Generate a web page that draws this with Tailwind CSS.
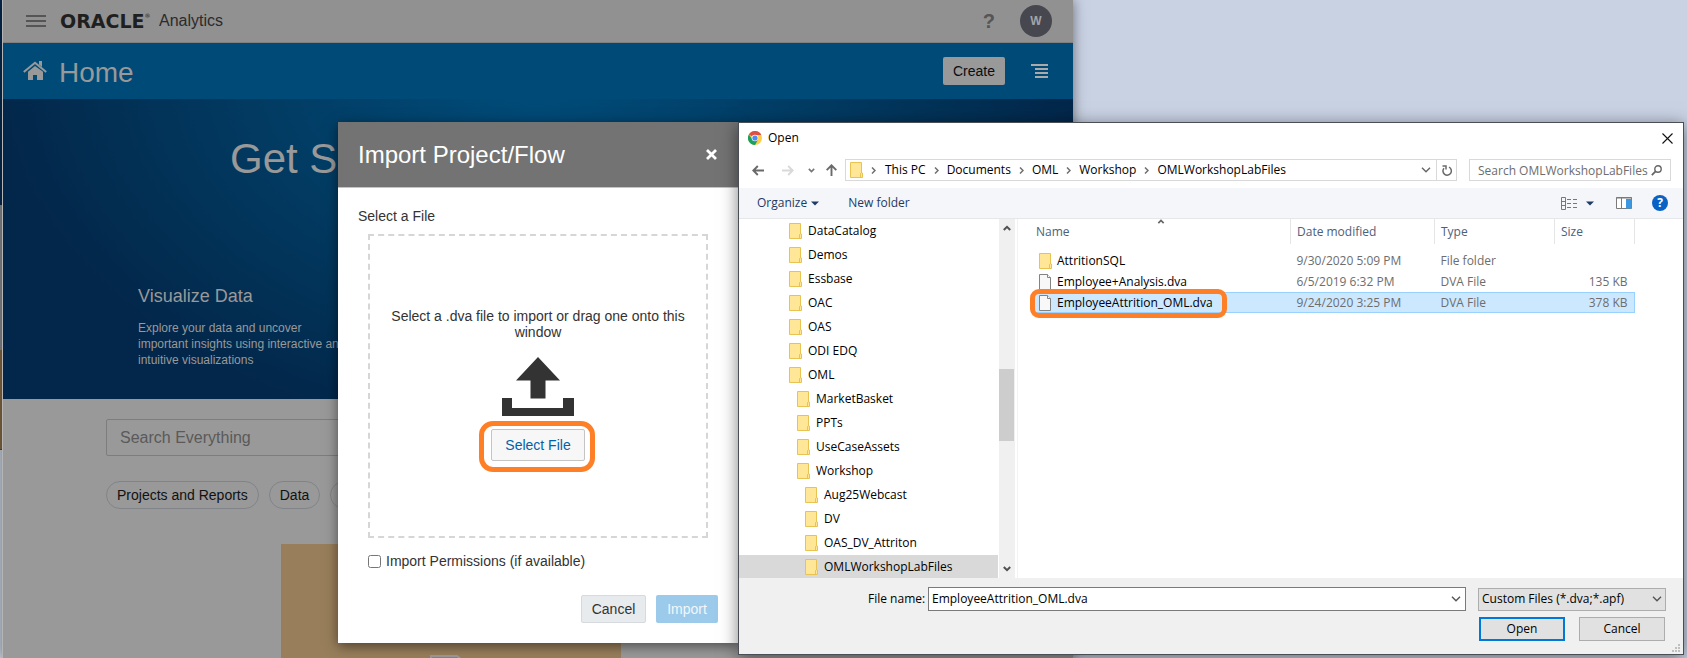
<!DOCTYPE html>
<html lang="en">
<head>
<meta charset="utf-8">
<title>Oracle Analytics - Import Project/Flow</title>
<script src="https://cdn.jsdelivr.net/npm/@tailwindcss/browser@4"></script>
</head>
<body class="font-['Liberation_Sans',Arial,sans-serif]">
<svg class="hidden" aria-hidden="true">
  <defs>
    <symbol id="folder" viewBox="0 0 13 16"><path d="M.5.5h11v10.500h1v4.500H.5z" fill="#ffe797" stroke="#e9c351"/><path d="M10.500 15.500v-4l1-1" fill="none" stroke="#e9c351"/></symbol>
    <symbol id="file" viewBox="0 0 12 16"><path d="M.5.5h8l3 3v12H.5z" fill="#f8f8f8" stroke="#838383"/><path d="M8.500.5v3h3" fill="#fff" stroke="#838383"/></symbol>
    <symbol id="right" viewBox="0 0 5 7"><path d="M1 .5l3 3-3 3" fill="none" stroke="#6f6f6f" stroke-width="1.500"/></symbol>
    <symbol id="down" viewBox="0 0 10 6"><path d="M1 .8l4 4 4-4" fill="none" stroke="currentColor" stroke-width="1.400"/></symbol>
    <symbol id="arrow" viewBox="0 0 8 6"><path d="M.8 1 4 4.200 7.200 1" fill="none" stroke="currentColor" stroke-width="2"/></symbol>
  </defs>
</svg>
<div class="relative min-h-screen overflow-hidden bg-[#c9d2e3]">

  <!-- Windows peeking out behind the browser -->
  <div class="absolute left-0 top-0 flex h-[450px] w-[2px] flex-col" aria-hidden="true">
    <div class="h-[205px] bg-[#062a50]"></div>
    <div class="h-[145px] bg-[#8a8c90]"></div>
    <div class="grow border-b border-[#5c4a33] bg-[#876a45]"></div>
  </div>

  <!-- Browser window -->
  <div class="absolute bottom-0 left-[2px] top-0 flex w-[1071px] flex-col overflow-hidden border-l border-[#b5b5b5] bg-[#999] shadow-[0_0_12px_rgba(0,0,0,0.5)]">
    <header class="flex h-[43px] shrink-0 items-center border-b border-[#808080] bg-[#919191] pl-[23px] pr-[21px]">
      <button aria-label="Menu" class="mr-[14px]"><svg class="block h-3 w-5" viewBox="0 0 20 12"><path d="M0 1h20M0 6h20M0 11h20" stroke="#555" stroke-width="2"/></svg></button>
      <a href="#" class="flex items-center text-[#1f1f1f]"><span class="flex w-[92px] font-['DejaVu_Sans'] text-[19px] leading-5 font-bold">ORACLE<span class="text-[6px] leading-[10px] font-normal">®</span></span><span class="ml-[7px] text-base leading-5 text-[#2b2b2b]">Analytics</span></a>
      <button class="ml-auto text-[20px] leading-5 font-bold text-[#555]" aria-label="Help">?</button>
      <button class="ml-[25px] size-8 rounded-full bg-[#474750] text-xs font-bold text-[#a3a3a8]">W</button>
    </header>
    <div class="flex h-[56px] shrink-0 items-center bg-[#004a77] pl-5 pr-[25px] text-[#999]">
      <svg class="h-5 w-6" viewBox="0 0 24 20"><path d="M.8 11 12 1.800 23.200 11" fill="none" stroke="#999" stroke-width="2"/><path d="M16 0h3v6l-3-2.500z" fill="#999"/><path d="M5 10.800 12 5l8 5.800V19h-6v-5h-4v5H5z" fill="#999"/></svg>
      <h1 class="ml-3 mt-1 text-[28px] leading-8">Home</h1>
      <button class="ml-auto h-7 w-[62px] rounded-[2px] bg-[#999] text-sm text-[#0c0c0c]">Create</button>
      <button aria-label="Page menu" class="ml-[26px]"><svg class="block h-[14px] w-[17px]" viewBox="0 0 17 14"><path d="M0 1h17M4 5h13M4 9h13M4 13h13" stroke="#aaa" stroke-width="2"/></svg></button>
    </div>
    <section class="h-[300px] shrink-0 bg-[radial-gradient(ellipse_540px_370px_at_50%_-10%,#004d7b_0%,#023a61_55%,#02274a_100%)] text-[#999]">
      <h2 class="pl-[227px] pt-9 text-[42px] leading-[48px]">Get S</h2>
      <div class="ml-[135px] mt-[103px] w-[216px]">
        <h3 class="text-lg leading-5">Visualize Data</h3>
        <p class="mt-[14px] text-xs leading-4">Explore your data and uncover important insights using interactive and intuitive visualizations</p>
      </div>
    </section>
    <main class="flex grow flex-col pl-[103px]">
      <input type="search" aria-label="Search" placeholder="Search Everything" class="mt-5 h-[37px] w-[860px] rounded-[2px] border border-[#7d7d7d] bg-transparent px-[13px] text-base placeholder:text-[#5a5a5a]">
      <div class="mt-[25px] flex gap-[10px] text-sm text-[#111]">
        <button class="h-7 rounded-full border border-[#808488] px-[10px]">Projects and Reports</button>
        <button class="h-7 rounded-full border border-[#808488] px-[10px]">Data</button>
        <button class="h-7 w-16 rounded-full border border-[#808488]" aria-label="More filters"></button>
      </div>
      <div class="ml-[175px] mt-[35px] flex w-[340px] grow items-end justify-center bg-[#987e5b]">
        <svg class="h-[3px] w-[31px] -ml-3" viewBox="0 0 31 3"><path d="M1 3V1h26l3 2" fill="none" stroke="#999" stroke-width="2"/></svg>
      </div>
    </main>
  </div>

  <!-- Import dialog -->
  <div role="dialog" aria-label="Import Project/Flow" class="absolute left-[338px] top-[122px] w-[400px] bg-white text-sm text-[#333] shadow-[0_3px_12px_rgba(0,0,0,0.5)]">
    <div class="flex h-[66px] items-center justify-between border-b border-[#c4c4c4] bg-[#737373] pl-5 pr-[21px] text-white">
      <h2 class="text-2xl leading-7">Import Project/Flow</h2>
      <button aria-label="Close"><svg class="block size-[11px]" viewBox="0 0 11 11"><path d="M1 1l9 9M10 1l-9 9" stroke="#fff" stroke-width="2.800"/></svg></button>
    </div>
    <div class="px-5 pb-5 pt-5">
      <p class="leading-4">Select a File</p>
      <div class="mx-[10px] mt-[10px] flex h-[304px] flex-col items-center border-2 border-dashed border-[#d6d6d6] px-4 pt-[72px]">
        <p class="text-center leading-4">Select a .dva file to import or drag one onto this window</p>
        <svg class="mt-[17px] h-[59px] w-[72px]" viewBox="0 0 72 59" fill="#333"><path d="M36 0 58 23.500H43.500V41.500H28.500V23.500H14z"/><path d="M0 41h10v10h51V41h11v18H0z"/></svg>
        <div class="relative mt-[13px]">
          <button class="h-8 w-[94px] rounded-[2px] border border-[#c4c4c4] bg-[#f7f7f7] text-[#0063a8]">Select File</button>
          <div class="pointer-events-none absolute -bottom-[11px] -left-3 -right-[10px] -top-2 rounded-[14px] border-[5px] border-[#ff7f27]"></div>
        </div>
      </div>
      <label class="ml-[10px] mt-[15px] flex items-center gap-[5px] leading-4"><input type="checkbox" class="size-[13px] rounded-[3px]">Import Permissions (if available)</label>
      <div class="mt-[26px] flex justify-end gap-[10px]">
        <button class="h-7 w-[65px] rounded-[2px] border border-[#d6dadf] bg-[#e8ebee] text-[#333]">Cancel</button>
        <button class="h-7 w-[62px] rounded-[2px] bg-[#9bcaea] text-[#f1f7fc]">Import</button>
      </div>
    </div>
  </div>

  <!-- File picker -->
  <div role="dialog" aria-label="Open" class="absolute bottom-[3px] left-[738px] right-[3px] top-[122px] flex flex-col border border-[#4a4f56] bg-white font-['Open_Sans','Noto_Sans',sans-serif] text-xs text-black shadow-[0_3px_16px_rgba(0,0,0,0.5)]">
    <div class="flex h-[30px] shrink-0 items-center pl-[9px] pr-[10px]">
      <svg class="size-[14px]" viewBox="0 0 14 14"><circle cx="7" cy="7" r="7" fill="#ffcd40"/><path d="M7 7 .9 3.500A7 7 0 0 1 13.100 3.600L13 4H7z" fill="#dd4f43"/><path d="M.9 3.500A7 7 0 0 0 7 14L10 8.700 4.400 8.500z" fill="#1aa15f"/><circle cx="7" cy="7" r="3.300" fill="#f4f4f4"/><circle cx="7" cy="7" r="2.600" fill="#4c8bf5"/></svg>
      <span class="ml-[6px]">Open</span>
      <button aria-label="Close" class="ml-auto"><svg class="block size-[11px]" viewBox="0 0 11 11"><path d="M.5.5l10 10M10.500.5l-10 10" stroke="#111" stroke-width="1.100"/></svg></button>
    </div>
    <div class="flex shrink-0 items-center pb-[7px] pl-[13px] pr-3 pt-[6px]">
      <button aria-label="Back"><svg class="block h-[11px] w-3" viewBox="0 0 12 11" fill="none" stroke="#6a6a6a" stroke-width="1.900"><path d="M12 5.500H1.500M5.800 1 1.300 5.500 5.800 10"/></svg></button>
      <button aria-label="Forward" class="ml-[18px]"><svg class="block h-[11px] w-3" viewBox="0 0 12 11" fill="none" stroke="#d9d9d9" stroke-width="1.900"><path d="M0 5.500h10.500M6.200 1l4.500 4.500L6.200 10"/></svg></button>
      <button aria-label="Recent locations" class="ml-[14px] text-[#777]"><svg class="block h-[5px] w-[7px]"><use href="#arrow"/></svg></button>
      <button aria-label="Up" class="ml-[11px]"><svg class="block h-3 w-[11px]" viewBox="0 0 11 12" fill="none" stroke="#6a6a6a" stroke-width="1.900"><path d="M5.500 12V1.500M.7 6.100 5.500 1.300l4.800 4.800"/></svg></button>
      <div class="ml-[8px] flex h-[22px] grow items-center border border-[#d9d9d9]">
        <svg class="ml-1 h-4 w-[13px]"><use href="#folder"/></svg>
        <nav aria-label="Path" class="flex items-center">
          <svg class="ml-2 mr-[9px] h-[7px] w-[5px]"><use href="#right"/></svg><a href="#">This PC</a>
          <svg class="mx-2 h-[7px] w-[5px]"><use href="#right"/></svg><a href="#">Documents</a>
          <svg class="mx-2 h-[7px] w-[5px]"><use href="#right"/></svg><a href="#">OML</a>
          <svg class="mx-2 h-[7px] w-[5px]"><use href="#right"/></svg><a href="#">Workshop</a>
          <svg class="mx-2 h-[7px] w-[5px]"><use href="#right"/></svg><a href="#">OMLWorkshopLabFiles</a>
        </nav>
        <button aria-label="Previous locations" class="ml-auto mr-[5px] text-[#666]"><svg class="block h-[6px] w-[10px]"><use href="#down"/></svg></button>
        <button aria-label="Refresh" class="flex h-full w-5 items-center justify-center border-l border-[#d9d9d9]"><svg class="h-[11px] w-[10px]" viewBox="0 0 10 11" fill="none" stroke="#6a6a6a" stroke-width="1.500"><path d="M7 2.200A4.200 4.200 0 1 1 2 3.200"/><path d="M.5 1h3.500v3.500" /></svg></button>
      </div>
      <div class="relative ml-3 h-[22px] w-[202px] border border-[#d9d9d9]">
        <input type="text" aria-label="Search folder" placeholder="Search OMLWorkshopLabFiles" class="block h-full w-full pl-2 placeholder:text-[#6d6d6d]">
        <svg class="absolute right-2 top-[5px] size-[11px]" viewBox="0 0 11 11" fill="none" stroke="#666"><circle cx="7" cy="4" r="3.200" stroke-width="1.400"/><path d="M4.600 6.400.8 10.200" stroke-width="1.800"/></svg>
      </div>
    </div>
    <div class="flex h-[31px] shrink-0 items-center border-b border-[#e5e7ea] bg-[#f4f6f9] pl-[18px] pr-[15px] text-[#1e3a66]">
      <button class="flex items-center gap-1">Organize<svg class="h-[5px] w-2" viewBox="0 0 8 5"><path d="M0 .5h8L4 4.500z" fill="#1e3a66"/></svg></button>
      <button class="ml-[29px]">New folder</button>
      <button aria-label="Change view" class="ml-auto flex items-center gap-[9px]">
        <svg class="h-[13px] w-4" viewBox="0 0 16 13" fill="none" stroke="#777"><path d="M.5.5h4v12h-4zM.5 4.500h4M.5 8.500h4M6 2.500h4M12 2.500h4M6 6.500h4M12 6.500h4M6 10.500h4M12 10.500h4"/></svg>
        <svg class="h-[5px] w-2" viewBox="0 0 8 5"><path d="M0 .5h8L4 4.500z" fill="#1e3a66"/></svg>
      </button>
      <button aria-label="Preview pane" class="ml-[22px]"><svg class="block h-3 w-4" viewBox="0 0 16 12"><path d="M.5.5h15v11H.5z" fill="#fff" stroke="#7b7b7b"/><path d="M0 1h16M5.500 1v11" stroke="#7b7b7b"/><path d="M10 2h5.500v9.500H10z" fill="#3d97e0"/></svg></button>
      <button aria-label="Help" class="ml-5 size-4 rounded-full bg-[#0a62c4] text-xs leading-4 font-bold text-white">?</button>
    </div>
    <div class="flex min-h-0 grow">
      <ul class="w-[259px] shrink-0 overflow-hidden leading-6 [&>li]:flex [&>li]:h-6 [&>li]:items-center [&>li]:gap-[6px] [&_svg]:h-4 [&_svg]:w-[13px]">
        <li class="pl-[50px]"><svg><use href="#folder"/></svg>DataCatalog</li>
        <li class="pl-[50px]"><svg><use href="#folder"/></svg>Demos</li>
        <li class="pl-[50px]"><svg><use href="#folder"/></svg>Essbase</li>
        <li class="pl-[50px]"><svg><use href="#folder"/></svg>OAC</li>
        <li class="pl-[50px]"><svg><use href="#folder"/></svg>OAS</li>
        <li class="pl-[50px]"><svg><use href="#folder"/></svg>ODI EDQ</li>
        <li class="pl-[50px]"><svg><use href="#folder"/></svg>OML</li>
        <li class="pl-[58px]"><svg><use href="#folder"/></svg>MarketBasket</li>
        <li class="pl-[58px]"><svg><use href="#folder"/></svg>PPTs</li>
        <li class="pl-[58px]"><svg><use href="#folder"/></svg>UseCaseAssets</li>
        <li class="pl-[58px]"><svg><use href="#folder"/></svg>Workshop</li>
        <li class="pl-[66px]"><svg><use href="#folder"/></svg>Aug25Webcast</li>
        <li class="pl-[66px]"><svg><use href="#folder"/></svg>DV</li>
        <li class="pl-[66px]"><svg><use href="#folder"/></svg>OAS_DV_Attriton</li>
        <li class="bg-[#d9d9d9] pl-[66px]"><svg><use href="#folder"/></svg>OMLWorkshopLabFiles</li>
      </ul>
      <div class="ml-px flex w-4 shrink-0 flex-col items-center bg-[#f0f0f0] py-[6px] text-[#505050]" aria-hidden="true">
        <svg class="h-[6px] w-2 rotate-180"><use href="#arrow"/></svg>
        <div class="mb-auto mt-[138px] h-[72px] w-full border-r border-[#f0f0f0] bg-[#cdcdcd]"></div>
        <svg class="h-[6px] w-2"><use href="#arrow"/></svg>
      </div>
      <div class="ml-[2px] grow border-l border-[#f3f3f3] pl-4 pr-12">
        <table class="w-full table-fixed text-left text-[#6d6d6d]">
          <colgroup><col><col class="w-36"><col class="w-[120px]"><col class="w-20"></colgroup>
          <thead class="text-[#4c607a] [&_th]:h-[25px] [&_th]:border-r [&_th]:border-[#e5e5e5] [&_th]:font-normal">
            <tr>
              <th class="relative pl-[2px]">Name<svg class="absolute right-[125px] top-0 h-[5px] w-2 rotate-180 text-[#666]"><use href="#arrow"/></svg></th>
              <th class="pl-[6px]">Date modified</th><th class="pl-[6px]">Type</th><th class="pl-[6px]">Size</th>
            </tr>
          </thead>
          <tbody class="[&_td]:h-[21px] [&_td]:whitespace-nowrap [&_td]:p-0 [&_td]:pl-[6px] [&_td:first-child]:pl-[5px]">
            <tr aria-hidden="true"><td class="h-[6px]!" colspan="4"></td></tr>
            <tr><td><span class="flex items-center gap-[5px] text-black"><svg class="h-4 w-[13px]"><use href="#folder"/></svg>AttritionSQL</span></td><td>9/30/2020 5:09 PM</td><td>File folder</td><td></td></tr>
            <tr><td><span class="flex items-center gap-[6px] text-black"><svg class="h-4 w-3"><use href="#file"/></svg>Employee+Analysis.dva</span></td><td>6/5/2019 6:32 PM</td><td>DVA File</td><td class="pr-[7px]! text-right">135 KB</td></tr>
            <tr class="bg-[#cce8ff] outline outline-[#99d1ff] -outline-offset-1"><td class="relative"><span class="flex items-center gap-[6px] text-black"><svg class="h-4 w-3"><use href="#file"/></svg>EmployeeAttrition_OML.dva</span><span class="pointer-events-none absolute -bottom-[5px] -left-1 -top-[3px] w-[197px] rounded-[9px] border-[5px] border-[#ff7f27]"></span></td><td>9/24/2020 3:25 PM</td><td>DVA File</td><td class="pr-[7px]! text-right">378 KB</td></tr>
          </tbody>
        </table>
      </div>
    </div>
    <form class="relative shrink-0 bg-[#f0f0f0] pb-[13px] pl-[129px] pr-[17px] pt-[9px]">
      <div class="flex items-center">
        <label for="fname" class="w-[60px] whitespace-nowrap">File name:</label>
        <div class="flex h-6 grow items-center border border-[#7a7a7a] bg-white pl-[3px] pr-1">
          <input id="fname" type="text" value="EmployeeAttrition_OML.dva" class="min-w-0 grow">
          <button type="button" aria-label="Show file names" class="text-[#555]"><svg class="block h-[6px] w-[10px]"><use href="#down"/></svg></button>
        </div>
        <div class="relative ml-3 w-[188px] text-[#555]">
          <select aria-label="File type" class="block h-[23px] w-full appearance-none border border-[#adadad] bg-[#e1e1e1] pl-[3px] text-black"><option>Custom Files (*.dva;*.apf)</option></select>
          <svg class="pointer-events-none absolute right-1 top-2 h-[6px] w-[10px]"><use href="#down"/></svg>
        </div>
      </div>
      <div class="mt-[6px] flex justify-end gap-[14px] pr-px">
        <button type="button" class="h-6 w-[86px] border-2 border-[#0078d7] bg-[#e1e1e1]">Open</button>
        <button type="button" class="h-6 w-[86px] border border-[#adadad] bg-[#e1e1e1]">Cancel</button>
      </div>
      <svg class="absolute bottom-[2px] right-[3px] size-2" viewBox="0 0 8 8" fill="#bfbfbf"><path d="M6 0h2v2H6zM3 3h2v2H3zM6 3h2v2H6zM0 6h2v2H0zM3 6h2v2H3zM6 6h2v2H6z"/></svg>
    </form>
  </div>
</div>
</body>
</html>
